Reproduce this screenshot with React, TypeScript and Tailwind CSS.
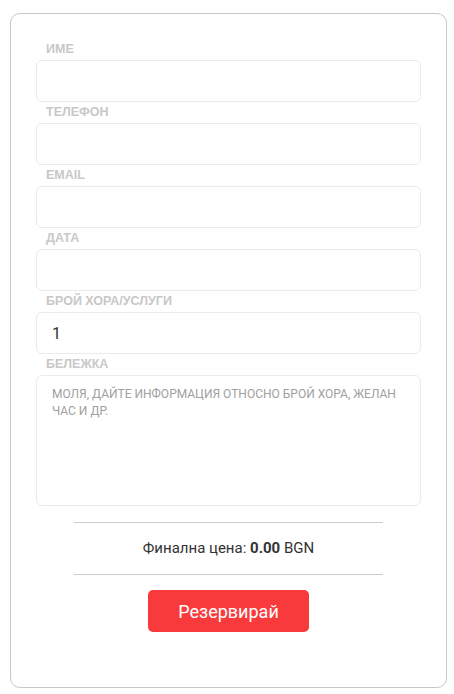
const fields = ["Име", "Телефон", "Email", "Дата"];

function Label({ children }: { children: React.ReactNode }) {
  return (
    <div className="h-[21px] pl-[10px] text-[12.5px] leading-[21px] font-bold uppercase text-[#c8c8c8] font-['Liberation_Sans',Arial,sans-serif]">
      {children}
    </div>
  );
}

export default function App() {
  return (
    <div className="min-h-screen bg-white pl-[10px] pt-[13px] pb-[7px]">
      <div className="w-[437px] rounded-[10px] border border-[#c8c8c8] px-[25px] pt-[25px] pb-[55px]">
        {fields.map((f) => (
          <div key={f}>
            <Label>{f}</Label>
            <input className="block h-[42px] w-full rounded-[6px] border border-[#ebebeb] bg-white px-[15px] outline-none" />
          </div>
        ))}
        <Label>Брой хора/услуги</Label>
        <input
          defaultValue="1"
          className="block h-[42px] w-full rounded-[6px] border border-[#ebebeb] bg-white px-[15px] text-[16px] text-[#333] font-['Roboto',sans-serif] outline-none"
        />
        <Label>Бележка</Label>
        <textarea
          placeholder="МОЛЯ, ДАЙТЕ ИНФОРМАЦИЯ ОТНОСНО БРОЙ ХОРА, ЖЕЛАН ЧАС И ДР."
          className="block h-[131px] w-full resize-none rounded-[6px] border border-[#ebebeb] bg-white px-[15px] py-[10px] text-[12px] leading-[17px] text-[#333] placeholder:text-[#a0a0a0] font-['Roboto',sans-serif] outline-none"
        />
        <div className="mx-auto mt-[16px] w-[309px] border-t border-[#cccccc] border-b pt-[15px] pb-[16px] text-center text-[15px] leading-[20px] text-[#333] font-['Roboto',sans-serif]">
          Финална цена: <b>0.00</b> BGN
        </div>
        <div className="mt-[15px] flex justify-center">
          <button className="h-[42px] w-[161px] rounded-[5px] bg-[#f93a3c] text-[18px] text-white font-['Roboto',sans-serif]">
            Резервирай
          </button>
        </div>
      </div>
    </div>
  );
}
